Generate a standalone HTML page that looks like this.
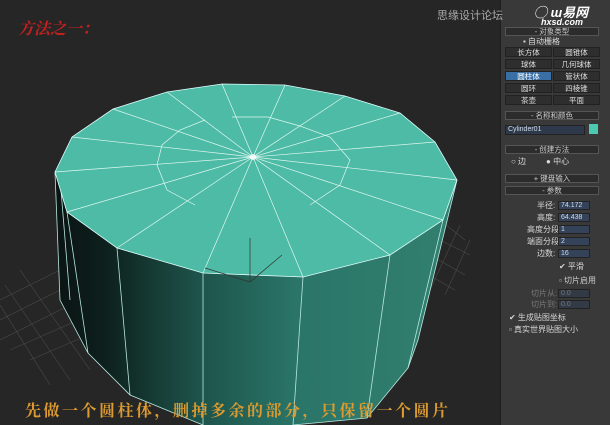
<!DOCTYPE html>
<html><head><meta charset="utf-8"><style>
*{margin:0;padding:0;box-sizing:border-box}
body{width:610px;height:425px;overflow:hidden;background:#262626;position:relative;font-family:"Liberation Sans","Noto Sans CJK SC",sans-serif}
.a{position:absolute}
.p{left:500px;top:0;width:110px;height:425px;background:#393939;border-left:1px solid #1e1e1e}
.t{font-size:8px;color:#d8d8d8;white-space:nowrap;line-height:10px}
.bar{background:#2c2c2c;border:1px solid #555;height:9px;font-size:7.5px;color:#ccc;text-align:center;line-height:8px}
.btn{background:#2e2e2e;border:1px solid #222;height:10px;font-size:7.5px;color:#ddd;text-align:center;line-height:9px}
.fld{background:#34435a;border:1px solid #222;height:9px;font-size:7px;color:#cfd8e4;line-height:8px;padding-left:2px}
</style></head><body>
<svg class="a" style="left:0;top:0" width="500" height="425">
<g stroke="#4a4a4a" stroke-width="0.6" fill="none">
<path d="M0 300 L60 270 M0 320 L70 285 M0 340 L80 300 M10 350 L90 315 M30 360 L100 330 M20 270 L90 370 M5 285 L70 380 M0 305 L50 385"/>
<path d="M440 220 L465 240 M440 240 L470 255 M430 255 L465 275 M420 270 L455 290 M445 210 L415 280 M460 225 L430 290 M470 240 L445 295"/>
</g>
<defs>
<linearGradient id="g" x1="0" x2="1" y1="0" y2="0">
<stop offset="0" stop-color="#0b1413"/><stop offset="0.12" stop-color="#0d1f1c"/><stop offset="0.35" stop-color="#1d5249"/><stop offset="0.6" stop-color="#2a7568"/><stop offset="1" stop-color="#32806f"/>
</linearGradient>
</defs>
<polygon fill="url(#g)" points="55,172 67,212 117,248 203,273 303,277 390,255 443,220 457,180 418,340 408,368 367,418 293,425 203,425 130,395 88,353 60,300"/>
<g stroke="#b8e8df" stroke-width="0.8" fill="none">
<path d="M55,172 L60,300 L88,353 L130,395 L203,425 M293,425 L367,418 L408,368 L418,340 L457,180"/>
<path d="M67,212 L88,353 M117,248 L130,395 M203,273 L203,425 M303,277 L293,425 M390,255 L367,418 M443,220 L408,368 M60,178 L70,300"/>
</g>
<polygon fill="#4dbba5" stroke="#dff" stroke-width="0.8" points="222,84 285,85 345,96 400,113 435,142 457,180 443,220 390,255 303,277 203,273 117,248 67,212 55,172 72,137 113,109 167,92"/>
<g stroke="#dff8f2" stroke-width="0.7" fill="none">
<path d="M253,157 L222,84 M253,157 L285,85 M253,157 L345,96 M253,157 L400,113 M253,157 L435,142 M253,157 L457,180 M253,157 L443,220 M253,157 L390,255 M253,157 L303,277 M253,157 L203,273 M253,157 L117,248 M253,157 L67,212 M253,157 L55,172 M253,157 L72,137 M253,157 L113,109 M253,157 L167,92"/>
<path d="M232,117 L268,117 L300,126 L330,137 L350,160 L340,185 L310,205 M195,205 L167,190 L157,165 L162,145 L180,130 L205,120"/>
</g>
<circle cx="253" cy="157" r="3" fill="#fff" opacity="0.8"/>
<g stroke="#333" stroke-width="0.7"><path d="M250,238 L250,282 M250,282 L205,268 M250,282 L282,255"/></g>
</svg>
<div class="a" style="left:18px;top:16px;font-size:16px;color:#c4211e;font-family:'Liberation Serif','Noto Serif CJK SC',serif;font-weight:bold;font-style:italic">方法之一：</div>
<div class="a" style="left:25px;top:398px;font-size:16px;color:#dc9a30;font-weight:bold;font-family:'Liberation Serif','Noto Serif CJK SC',serif;letter-spacing:2.5px">先做一个圆柱体，删掉多余的部分，只保留一个圆片</div>
<div class="a p">
<div class="a" style="left:33px;top:2px;font-size:13px;color:#fff;font-weight:bold;font-style:italic">◯ ш易网</div>
<div class="a" style="left:40px;top:17px;font-size:9px;color:#fff;font-weight:bold;font-style:italic">hxsd.com</div>
<div class="a bar" style="left:4px;top:27px;width:94px">- 对象类型</div>
<div class="a t" style="left:22px;top:37px">▪ 自动栅格</div>
<div class="a btn" style="left:4px;top:47px;width:47px">长方体</div><div class="a btn" style="left:52px;top:47px;width:47px">圆锥体</div>
<div class="a btn" style="left:4px;top:59px;width:47px">球体</div><div class="a btn" style="left:52px;top:59px;width:47px">几何球体</div>
<div class="a btn" style="left:4px;top:71px;width:47px;background:#3a6fa5;color:#fff">圆柱体</div><div class="a btn" style="left:52px;top:71px;width:47px">管状体</div>
<div class="a btn" style="left:4px;top:83px;width:47px">圆环</div><div class="a btn" style="left:52px;top:83px;width:47px">四棱锥</div>
<div class="a btn" style="left:4px;top:95px;width:47px">茶壶</div><div class="a btn" style="left:52px;top:95px;width:47px">平面</div>
<div class="a bar" style="left:4px;top:111px;width:94px">- 名称和颜色</div>
<div class="a fld" style="left:4px;top:125px;width:80px;height:10px;background:#2e3a4c">Cylinder01</div>
<div class="a" style="left:88px;top:124px;width:9px;height:10px;background:#4cc9b0"></div>
<div class="a bar" style="left:4px;top:145px;width:94px">- 创建方法</div>
<div class="a t" style="left:10px;top:157px">○ 边 &nbsp;&nbsp;&nbsp;&nbsp;&nbsp;&nbsp;&nbsp;&nbsp;● 中心</div>
<div class="a bar" style="left:4px;top:174px;width:94px">+ 键盘输入</div>
<div class="a bar" style="left:4px;top:186px;width:94px">- 参数</div>
<div class="a t" style="left:36px;top:201px">半径:</div><div class="a fld" style="left:57px;top:201px;width:32px">74.172</div>
<div class="a t" style="left:36px;top:213px">高度:</div><div class="a fld" style="left:57px;top:213px;width:32px">64.438</div>
<div class="a t" style="left:26px;top:225px">高度分段:</div><div class="a fld" style="left:57px;top:225px;width:32px">1</div>
<div class="a t" style="left:26px;top:237px">端面分段:</div><div class="a fld" style="left:57px;top:237px;width:32px">2</div>
<div class="a t" style="left:36px;top:249px">边数:</div><div class="a fld" style="left:57px;top:249px;width:32px">16</div>
<div class="a t" style="left:58px;top:262px">✔ 平滑</div>
<div class="a t" style="left:58px;top:276px;color:#ccc">▫ 切片启用</div>
<div class="a t" style="left:30px;top:289px;color:#777">切片从:</div><div class="a fld" style="left:57px;top:289px;width:32px;background:#323a46;color:#777">0.0</div>
<div class="a t" style="left:30px;top:300px;color:#777">切片到:</div><div class="a fld" style="left:57px;top:300px;width:32px;background:#323a46;color:#777">0.0</div>
<div class="a t" style="left:8px;top:313px">✔ 生成贴图坐标</div>
<div class="a t" style="left:8px;top:325px">▫ 真实世界贴图大小</div>
</div>
<div class="a" style="left:437px;top:7px;font-size:11px;color:#aaa;z-index:5">思缘设计论坛</div>
</body></html>
